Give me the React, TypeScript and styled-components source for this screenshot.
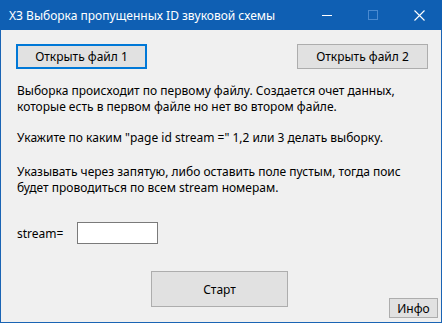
import styled, { createGlobalStyle } from 'styled-components';

const GlobalStyle = createGlobalStyle`
  html, body {
    margin: 0;
    padding: 0;
    background: #ffffff;
  }
  * {
    box-sizing: border-box;
  }
`;

const FONT = `"Segoe UI", "Noto Sans", "Open Sans", sans-serif`;

export default function App() {
  return (
    <>
      <GlobalStyle />
      <Window>
        <TitleBar>
          <Title>ХЗ Выборка пропущенных ID звуковой схемы</Title>
          <Controls>
            <CtrlButton>
              <svg width="11" height="11" viewBox="0 0 11 11">
                <path d="M0 5.5h10" stroke="#ffffff" strokeWidth="1" />
              </svg>
            </CtrlButton>
            <CtrlButton>
              <svg width="11" height="11" viewBox="0 0 11 11">
                <rect x="0.5" y="0.5" width="9" height="9" fill="none" stroke="#4a8ad0" strokeWidth="1" />
              </svg>
            </CtrlButton>
            <CtrlButton>
              <svg width="11" height="11" viewBox="0 0 11 11">
                <path d="M0.5 0.5l10 10M10.5 0.5l-10 10" stroke="#ffffff" strokeWidth="1.1" />
              </svg>
            </CtrlButton>
          </Controls>
        </TitleBar>
        <Body>
          <FileRow>
            <FileButton $focused>Открыть файл 1</FileButton>
            <FileButton>Открыть файл 2</FileButton>
          </FileRow>
          <Paragraph $gap={15}>
            Выборка происходит по первому файлу. Создается очет данных,
            <br />
            которые есть в первом файле но нет во втором файле.
          </Paragraph>
          <Paragraph $gap={18}>Укажите по каким "page id stream =" 1,2 или 3 делать выборку.</Paragraph>
          <Paragraph $gap={16}>
            Указывать через запятую, либо оставить поле пустым, тогда поис
            <br />
            будет проводиться по всем stream номерам.
          </Paragraph>
          <StreamRow>
            <Label>stream=</Label>
            <StreamInput />
          </StreamRow>
          <BottomRow>
            <span />
            <StartButton>Старт</StartButton>
            <InfoButton>Инфо</InfoButton>
          </BottomRow>
        </Body>
      </Window>
    </>
  );
}

const Window = styled.div`
  width: 442px;
  height: 323px;
  display: flex;
  flex-direction: column;
  border: 1px solid #1a64b4;
  border-top: none;
  font-family: ${FONT};
  font-size: 12px;
  color: #000000;
`;

const TitleBar = styled.div`
  height: 30px;
  flex-shrink: 0;
  display: flex;
  align-items: center;
  justify-content: space-between;
  background: #0f5fb3;
  margin: 0 -1px;
  padding-left: 9px;
`;

const Title = styled.div`
  color: #ffffff;
  font-size: 12px;
  white-space: nowrap;
`;

const Controls = styled.div`
  display: flex;
  height: 100%;
`;

const CtrlButton = styled.div`
  width: 46px;
  height: 100%;
  display: flex;
  align-items: center;
  justify-content: center;
`;

const Body = styled.div`
  flex: 1;
  display: flex;
  flex-direction: column;
  background: #f0f0f0;
  padding: 14px 3px 4px 15px;
`;

const FileRow = styled.div`
  display: flex;
  justify-content: space-between;
  padding-right: 10px;
  margin-bottom: 14px;
`;

const BaseButton = styled.button`
  font-family: ${FONT};
  font-size: 12px;
  color: #000000;
  background: #e1e1e1;
  border: 1px solid #adadad;
  padding: 0;
  cursor: default;
`;

const FileButton = styled(BaseButton)<{ $focused?: boolean }>`
  width: 131px;
  height: 25px;
  border: ${(p) => (p.$focused ? '2px solid #0078d7' : '1px solid #adadad')};
`;

const Paragraph = styled.p<{ $gap: number }>`
  margin: 0 0 ${(p) => p.$gap}px 1px;
  line-height: 16px;
  white-space: nowrap;
`;

const StreamRow = styled.div`
  display: flex;
  align-items: center;
  margin-top: 10px;
  padding-left: 1px;
`;

const Label = styled.span`
  width: 60px;
`;

const StreamInput = styled.input`
  width: 81px;
  height: 22px;
  border: 1px solid #7a7a7a;
  background: #ffffff;
  outline: none;
  font-family: ${FONT};
  font-size: 12px;
`;

const BottomRow = styled.div`
  flex: 1;
  display: grid;
  grid-template-columns: 1fr auto 1fr;
  align-items: end;
  margin-left: -15px;
`;

const StartButton = styled(BaseButton)`
  width: 137px;
  height: 36px;
  margin-bottom: 11px;
`;

const InfoButton = styled(BaseButton)`
  justify-self: end;
  width: 49px;
  height: 20px;
`;
